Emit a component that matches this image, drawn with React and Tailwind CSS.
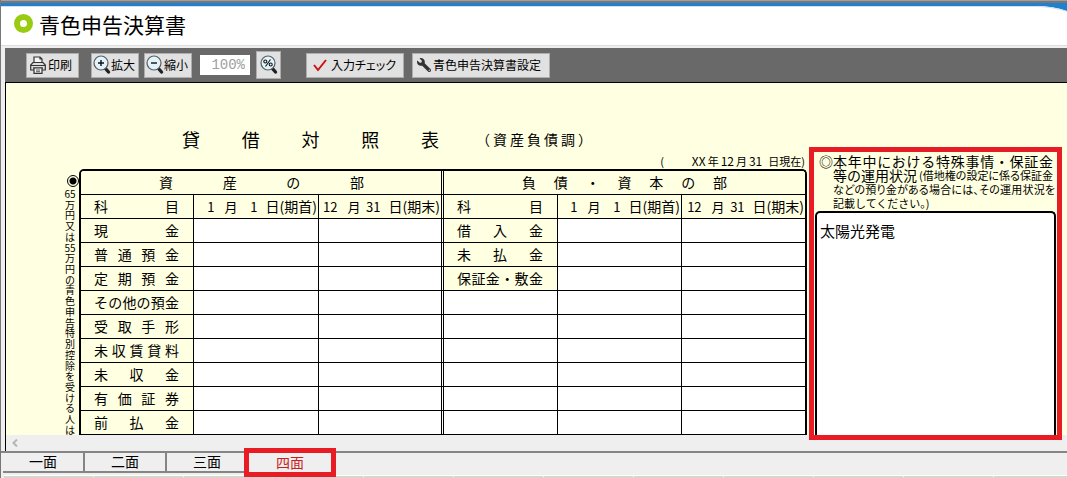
import { useState } from 'react'
import { FaWrench } from 'react-icons/fa'

const ASSETS = [
  '現金',
  '普通預金',
  '定期預金',
  'その他の預金',
  '受取手形',
  '未収賃貸料',
  '未収金',
  '有価証券',
  '前払金',
]
const LIABILITIES = ['借入金', '未払金', '保証金・敷金']
const TABS = ['一面', '二面', '三面', '四面']
const COLUMN_WIDTHS = [113, 125, 125, 114, 124, 123]
const DEDUCTION_NOTE = ['65', ...'万円又は', '55', ...'万円の青色申告特別控除を受ける人は']

function PrinterIcon() {
  return (
    <svg viewBox="0 0 16 18" className="w-4 h-[18px]" fill="#f4f4f4" stroke="#333" strokeWidth="1.2">
      <path d="M4 7V1h6l2 2v4" />
      <path d="M10 1v2h2" fill="none" />
      <path d="M3 6.500h10l2.300 2.500v5H.700V9z" fill="#ddd" />
      <path d="M1 9.500h14M3 12h10" fill="none" />
      <path d="M4 12h8v5.300H4z" />
      <path d="M6 14h4M6 15.700h4" strokeWidth=".8" />
    </svg>
  )
}

function MagnifierIcon({ children }) {
  return (
    <svg viewBox="0 0 18 20" className="w-[18px] h-5 shrink-0" fill="none">
      <path d="M12 13l3.500 4" stroke="#222" strokeWidth="3.400" strokeLinecap="round" />
      <circle cx="8" cy="8" r="7" fill="#e3f3fa" stroke="#555d66" strokeWidth="1.200" />
      <g stroke="#111" strokeWidth="1.400">{children}</g>
    </svg>
  )
}

function ToolButton({ className, children, ...props }) {
  return (
    <button
      className={`flex items-center border border-[#adadad] bg-[#e1e1e1] text-[12px] leading-none whitespace-nowrap ${className}`}
      {...props}
    >
      {children}
    </button>
  )
}

function Toolbar() {
  return (
    <div className="flex items-center h-[34px] pl-[21px] bg-[#696969]">
      <ToolButton className="h-[25px] w-[53px] pl-[3px] gap-0.5">
        <PrinterIcon />
        印刷
      </ToolButton>
      <ToolButton className="h-[25px] w-12 ml-3 pl-px">
        <MagnifierIcon>
          <path d="M5 8h6M8 5v6" />
        </MagnifierIcon>
        拡大
      </ToolButton>
      <ToolButton className="h-[25px] w-12 ml-[5px] pl-px">
        <MagnifierIcon>
          <path d="M5 8h6" />
        </MagnifierIcon>
        縮小
      </ToolButton>
      <input
        aria-label="倍率"
        defaultValue="100%"
        className="w-[50px] h-5 ml-2 pr-[5px] bg-white text-right text-[14px] text-[#a0a0a0] outline-none font-['Liberation_Mono',monospace]"
      />
      <ToolButton className="h-7 w-[25px] ml-1.5 justify-center" aria-label="倍率を設定">
        <MagnifierIcon>
          <g strokeWidth="1.100">
            <circle cx="5.300" cy="6.500" r="1.500" />
            <circle cx="10.700" cy="9.500" r="1.500" />
            <path d="M10.500 4.500l-5 7" />
          </g>
        </MagnifierIcon>
      </ToolButton>
      <ToolButton className="h-[25px] w-[98px] ml-[25px] pl-1.5 gap-1">
        <svg viewBox="0 0 14 14" className="size-3.5 shrink-0" fill="none" stroke="#cc1111" strokeWidth="2">
          <path d="M1 7l4 5L13 2" />
        </svg>
        <span className="[font-feature-settings:'palt']">入力チェック</span>
      </ToolButton>
      <ToolButton className="h-[25px] w-[138px] ml-2 pl-1 gap-0.5">
        <FaWrench className="size-3.5 shrink-0 -scale-x-100 text-[#333]" />
        青色申告決算書設定
      </ToolButton>
    </div>
  )
}

function Spread({ className = '', children }) {
  return (
    <div className={`[text-align-last:justify] whitespace-nowrap ${className}`}>{children}</div>
  )
}

function DateHead({ month, day, label, className = '' }) {
  return (
    <th scope="col" className={`h-6 p-0 border-r border-b border-black font-normal text-[13px] ${className}`}>
      <div className="flex justify-end pr-px leading-[23px] whitespace-nowrap">
        <span>{month}</span>
        <span className="ml-2.5">月</span>
        <span className="w-5 text-right">{day}</span>
        <span className="ml-2 text-[14px]">日({label})</span>
      </div>
    </th>
  )
}

function AccountCell({ children }) {
  return (
    <th scope="row" className="h-6 p-0 pl-[13px] pr-3.5 border-r border-b border-black bg-[#ffffe1] font-normal text-[14px]">
      <Spread className="leading-[23px]">{children}</Spread>
    </th>
  )
}

function AmountCell({ label, className = '' }) {
  return (
    <td className={`h-6 p-0 border-r border-b border-black ${className}`}>
      <input aria-label={label} className="block w-full h-[23px] px-1 text-right text-[13px] outline-none" />
    </td>
  )
}

function BalanceSheet() {
  return (
    <div className="border-2 border-b-0 border-black rounded-t-[5px] overflow-hidden bg-white">
      <table className="w-full table-fixed border-separate border-spacing-0">
        <colgroup>
          {COLUMN_WIDTHS.map((width, i) => (
            <col key={i} style={{ width }} />
          ))}
        </colgroup>
        <thead className="bg-[#ffffe1]">
          <tr>
            <th colSpan={3} className="h-6 p-0 pl-[78px] pr-[77px] border-b border-r-3 border-black [border-right-style:double] font-normal text-[14px]">
              <Spread className="leading-[23px]">資産の部</Spread>
            </th>
            <th colSpan={3} className="h-6 p-0 px-[78px] border-b border-black font-normal text-[14px]">
              <Spread className="leading-[23px]">負債・資本の部</Spread>
            </th>
          </tr>
          <tr>
            <AccountCell>科目</AccountCell>
            <DateHead month="1" day="1" label="期首" />
            <DateHead month="12" day="31" label="期末" className="border-r-3 [border-right-style:double]" />
            <AccountCell>科目</AccountCell>
            <DateHead month="1" day="1" label="期首" />
            <DateHead month="12" day="31" label="期末" className="border-r-0" />
          </tr>
        </thead>
        <tbody>
          {ASSETS.map((asset, i) => {
            const liability = LIABILITIES[i]
            return (
              <tr key={asset}>
                <AccountCell>{asset}</AccountCell>
                <AmountCell label={`${asset} 期首`} />
                <AmountCell label={`${asset} 期末`} className="border-r-3 [border-right-style:double]" />
                {liability ? <AccountCell>{liability}</AccountCell> : <AmountCell label={`科目 ${i + 1}`} />}
                <AmountCell label={`${liability || i + 1} 負債期首`} />
                <AmountCell label={`${liability || i + 1} 負債期末`} className="border-r-0" />
              </tr>
            )
          })}
        </tbody>
      </table>
    </div>
  )
}

function SpecialNotes() {
  return (
    <section className="relative z-10 flex flex-col w-[253px] shrink-0 mt-16 -mb-[5px] ml-0.5 mr-[5px] border-5 border-[#e81c24] px-px pt-0.5 bg-[#ffffe1]">
      <label htmlFor="notes" className="block pl-[18px] pr-px text-[11px] leading-[14px] whitespace-nowrap [font-feature-settings:'palt']">
        <span className="flex -ml-3.5 text-[14px] [font-feature-settings:normal]">
          <span>◎</span>
          <Spread className="flex-1 pr-0.5">本年中における特殊事情・保証金</Spread>
        </span>
        <span className="flex">
          <span className="text-[14px] [font-feature-settings:normal]">等の運用状況</span>
          <Spread className="flex-1 pl-0.5 pr-0.5">(借地権の設定に係る保証金</Spread>
        </span>
        <Spread>などの預り金がある場合には、その運用状況を</Spread>
        <span className="block [font-feature-settings:normal]">記載してください。)</span>
      </label>
      <textarea
        id="notes"
        defaultValue="太陽光発電"
        className="block w-full flex-1 mt-px pt-2 pl-[3px] border-2 border-b-0 border-black rounded-t-[5px] bg-white text-[15px] leading-5 resize-none outline-none"
      />
    </section>
  )
}

function SheetCanvas() {
  return (
    <main className="flex border-l border-t border-black bg-[#ffffe1]">
      <div className="flex-1 min-w-0 pl-[56px] pt-[46px]">
        <div className="flex items-center pl-[120px] leading-5">
          <h2 className="w-[257px] text-[18px]">
            <Spread>貸借対照表</Spread>
          </h2>
          <Spread className="w-[116px] ml-[37px] text-[14px]">（資産負債調）</Spread>
        </div>
        <div className="flex justify-end mt-1.5 mb-0.5 pr-0.5 text-[11px] leading-3 whitespace-nowrap">
          <span className="mr-7">(</span>
          <span className="text-[12px]">XX</span>
          <span className="mx-0.5">年</span>
          <span className="text-[12px]">12</span>
          <span className="mx-0.5">月</span>
          <span className="text-[12px]">31</span>
          <span className="ml-1.5">日現在)</span>
        </div>
        <div className="flex">
          <div className="flex flex-col items-center w-[17px] shrink-0 pt-1.5">
            <input
              id="deduction"
              type="radio"
              defaultChecked
              className="appearance-none size-3 ml-1 shrink-0 rounded-full border border-black checked:bg-[radial-gradient(circle,#000_3px,transparent_4px)]"
            />
            <label htmlFor="deduction" className="flex flex-col flex-1 justify-between items-center mt-0.5 pr-px text-[10px] leading-[10px]">
              {DEDUCTION_NOTE.map((char, i) => (
                <span key={i}>{char}</span>
              ))}
            </label>
          </div>
          <div className="flex-1 min-w-0">
            <BalanceSheet />
          </div>
        </div>
      </div>
      <SpecialNotes />
    </main>
  )
}

function SheetTabs() {
  const [active, setActive] = useState(3)

  return (
    <nav className="flex h-[22px] border-t-2 border-[#858585] pl-0.5">
      {TABS.map((tab, i) => (
        <button
          key={tab}
          onClick={() => setActive(i)}
          className={`w-[82px] text-[14px] leading-4 pb-0.5 ${
            active === i
              ? 'relative z-10 h-[19px] outline-5 outline-[#e81c24] text-[#c81e1e]'
              : 'h-5 border-r-2 border-b-2 border-[#858585]'
          }`}
        >
          {tab}
        </button>
      ))}
    </nav>
  )
}

export default function App() {
  return (
    <div
      lang="ja"
      className="min-h-screen overflow-hidden border-l border-[#777] bg-[#efefef] text-black font-['Noto_Sans_CJK_JP',sans-serif]"
    >
      <header className="relative flex items-center h-[46px] pl-[13px] pt-0.5 border-b border-[#ddd] bg-white">
        <svg viewBox="0 0 1067 12" preserveAspectRatio="xMaxYMin slice" className="absolute inset-x-0 top-0 w-full h-3">
          <path d="M0 0h1067v11q-14-5-32-5H0z" fill="#1f80cf" />
          <path d="M0 6.500h1035q18 0 32 5" fill="none" stroke="#cfe0f5" />
          <path d="M0 0h1067v3H0z" fill="#777" />
          <path d="M0 0h1067v1H0z" fill="#a0a0a0" />
        </svg>
        <span className="size-[19px] rounded-full border-6 border-[#99cc11]" />
        <h1 className="ml-1.5 text-[21px] leading-7">青色申告決算書</h1>
      </header>
      <div className="pt-0.5 pl-1">
        <Toolbar />
        <SheetCanvas />
        <div className="flex items-center h-4 pl-1.5 border-l border-black">
          <button aria-label="左へスクロール">
            <svg viewBox="0 0 6 8" className="w-1.5 h-2" fill="none" stroke="#b5b5b5" strokeWidth="2">
              <path d="M5 .5L1.500 4 5 7.500" />
            </svg>
          </button>
        </div>
      </div>
      <SheetTabs />
      <footer className="flex mt-0.5 h-[3px] pl-[3px]">
        {Array.from({ length: 12 }, (_, i) => (
          <span key={i} className="w-[90px] shrink-0 border-r border-t border-white border-b-2 border-b-[#d8d5cc]" />
        ))}
      </footer>
    </div>
  )
}
